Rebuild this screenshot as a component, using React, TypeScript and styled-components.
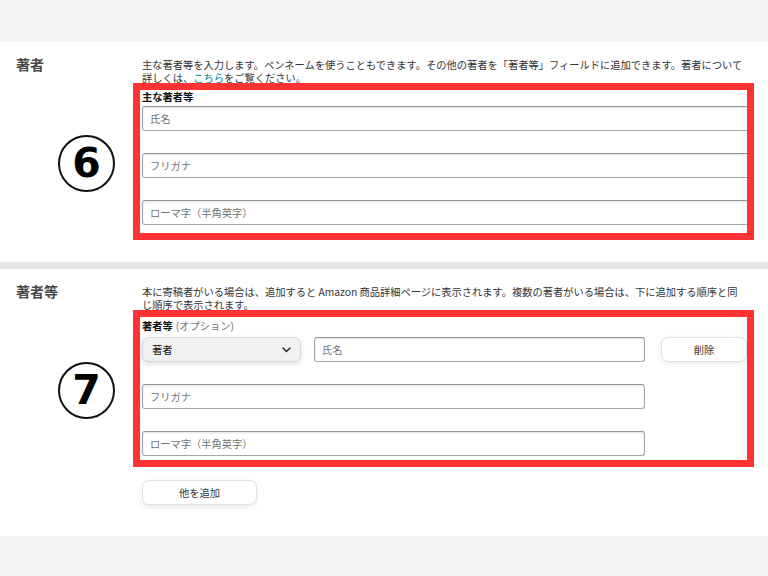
import React from "react";
import styled, { createGlobalStyle } from "styled-components";

const GlobalStyle = createGlobalStyle`
  html, body {
    margin: 0;
    padding: 0;
    background: #f3f3f3;
  }
  body {
    font-family: "Noto Sans CJK JP", "Liberation Sans", sans-serif;
    color: #0f1111;
  }
`;

const Page = styled.div`
  width: 768px;
  height: 576px;
  padding-top: 42px;
  box-sizing: border-box;
  overflow: hidden;
`;

const Section = styled.section<{ $bottom: number }>`
  background: #fff;
  display: grid;
  grid-template-columns: 142px 1fr;
  padding: 16px 14px ${({ $bottom }) => $bottom}px 0;
`;

const Divider = styled.div`
  height: 7px;
  background: #e7e7e7;
`;

const Label = styled.h2`
  margin: -3px 0 0 16px;
  font-size: 14px;
  line-height: 18px;
  font-weight: 700;
  color: #4a4a4a;
`;

const Description = styled.p`
  margin: 0;
  font-size: 10.25px;
  line-height: 13px;
  color: #333;
  white-space: nowrap;
`;

const Link = styled.a`
  color: #00829a;
  text-decoration: none;
`;

const Badge = styled.div`
  grid-column: 1;
  justify-self: end;
  align-self: center;
  margin: 3px 27px 0 0;
  width: 57px;
  height: 57px;
  box-sizing: border-box;
  border: 2px solid #111;
  border-radius: 50%;
  display: flex;
  align-items: center;
  justify-content: center;
  font-family: "DejaVu Sans", sans-serif;
  font-weight: 700;
  font-size: 41px;
  line-height: 1;
  color: #000;
  padding-bottom: 1px;
`;

const Frame = styled.div<{ $top: number; $bottom: number }>`
  grid-column: 2;
  margin: -1px 0 0 -9px;
  border: 7px solid #ff3333;
  padding: ${({ $top, $bottom }) => `${$top}px 0 ${$bottom}px 2px`};
  overflow: hidden;
  display: flex;
  flex-direction: column;
  gap: 22px;
`;

const FieldLabel = styled.div<{ $gap: number }>`
  font-size: 10.25px;
  line-height: 14px;
  font-weight: 700;
  color: #0f1111;
  margin-bottom: ${({ $gap }) => $gap - 22}px;
`;

const Optional = styled.span`
  font-weight: 400;
  color: #6f7373;
  margin-left: 3px;
`;

const Input = styled.input<{ $bleed?: boolean }>`
  display: block;
  box-sizing: border-box;
  height: 25px;
  width: ${({ $bleed }) => ($bleed ? "calc(100% + 12px)" : "100%")};
  margin: 0;
  padding: 0 7px;
  border: 1px solid #a6a6a6;
  border-top-color: #949494;
  border-radius: 3px;
  box-shadow: inset 0 1px 2px rgba(15, 17, 17, 0.12);
  background: #fff;
  font-family: "Noto Sans CJK JP", sans-serif;
  font-size: 10.25px;
  color: #0f1111;
  outline: none;
  &::placeholder {
    color: #6f7373;
  }
`;

const Narrow = styled.div`
  width: 503px;
`;

const ContributorRow = styled.div`
  display: grid;
  grid-template-columns: 159px 331px 86px;
  column-gap: 13px;
  & > :last-child {
    margin-left: 3px;
  }
`;

const Select = styled.div`
  height: 25px;
  box-sizing: border-box;
  display: flex;
  align-items: center;
  justify-content: space-between;
  padding: 0 9px 0 9px;
  background: #f0f2f2;
  border: 1px solid #d5d9d9;
  border-radius: 7px;
  box-shadow: 0 2px 5px rgba(15, 17, 17, 0.15);
  font-size: 10.25px;
  color: #0f1111;
`;

const Button = styled.button<{ $width?: number }>`
  height: 25px;
  width: ${({ $width }) => ($width ? `${$width}px` : "100%")};
  box-sizing: border-box;
  background: #fff;
  border: 1px solid #dde1e1;
  border-radius: 7px;
  box-shadow: 0 2px 5px rgba(213, 217, 217, 0.5);
  font-family: "Noto Sans CJK JP", sans-serif;
  font-size: 10.25px;
  color: #333;
  padding: 0;
`;

const AddRow = styled.div`
  grid-column: 2;
  margin-top: 11px;
`;

const Chevron = () => (
  <svg width="9" height="6" viewBox="0 0 9 6" fill="none">
    <path d="M1 1l3.5 3.5L8 1" stroke="#333" strokeWidth="1.6" strokeLinecap="round" strokeLinejoin="round" />
  </svg>
);

export default function App() {
  return (
    <>
      <GlobalStyle />
      <Page>
        <Section $bottom={22}>
          <Label>著者</Label>
          <Description>
            主な著者等を入力します。ペンネームを使うこともできます。その他の著者を「著者等」フィールドに追加できます。著者について
            <br />
            詳しくは、<Link href="#">こちら</Link>をご覧ください。
          </Description>
          <Badge>6</Badge>
          <Frame $top={0} $bottom={8}>
            <FieldLabel $gap={2}>主な著者等</FieldLabel>
            <Input $bleed placeholder="氏名" />
            <Input $bleed placeholder="フリガナ" />
            <Input $bleed placeholder="ローマ字（半角英字）" />
          </Frame>
        </Section>
        <Divider />
        <Section $bottom={31}>
          <Label>著者等</Label>
          <Description>
            本に寄稿者がいる場合は、追加すると Amazon 商品詳細ページに表示されます。複数の著者がいる場合は、下に追加する順序と同
            <br />
            じ順序で表示されます。
          </Description>
          <Badge>7</Badge>
          <Frame $top={2} $bottom={4}>
            <FieldLabel $gap={4}>
              著者等<Optional>(オプション)</Optional>
            </FieldLabel>
            <ContributorRow>
              <Select>
                <span>著者</span>
                <Chevron />
              </Select>
              <Input placeholder="氏名" />
              <Button>削除</Button>
            </ContributorRow>
            <Narrow>
              <Input placeholder="フリガナ" />
            </Narrow>
            <Narrow>
              <Input placeholder="ローマ字（半角英字）" />
            </Narrow>
          </Frame>
          <AddRow>
            <Button $width={115}>他を追加</Button>
          </AddRow>
        </Section>
      </Page>
    </>
  );
}
